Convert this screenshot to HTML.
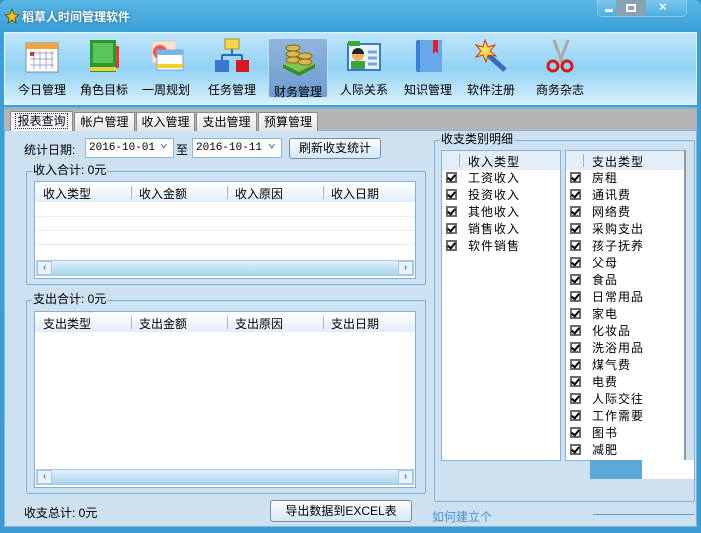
<!DOCTYPE html>
<html><head><meta charset="utf-8"><style>
*{box-sizing:border-box;margin:0;padding:0}
body{width:701px;height:533px;overflow:hidden;font-family:"Liberation Sans","Noto Sans CJK SC",sans-serif;font-size:12px;color:#000;background:#2f8fc8;position:relative}
.a{position:absolute}
.win{left:0;top:0;width:701px;height:533px;background:linear-gradient(#5ab8e6,#3aa0d8 30px,#3a9ad2);border-radius:6px 6px 0 0}
.title{left:22px;top:8px;color:#fff;font-weight:bold;font-size:12px;text-shadow:0 0 3px #1a5a8a}
.tb{left:4px;top:32px;width:693px;height:73px;background:linear-gradient(#bfe6fb,#92d2f4 50%,#d8f0fc);border:1px solid #e8f6ff}
.tool{top:36px;width:60px;height:64px;text-align:center}
.tool .l{position:absolute;left:-10px;right:-10px;top:45px;font-size:12px;text-align:center}
.tool svg{position:absolute;left:12px;top:2px}
.sel{background:linear-gradient(#8fb5dd,#6d9dd0);border:1px solid #c7dff3;border-radius:3px}
.tabs{left:4px;top:107px;width:693px;height:24px;background:#b5b5b5;border-top:2px solid #7fb3d8}
.tab{top:112px;height:19px;background:linear-gradient(#fafafa,#e6e6e6);border:1px solid #8a8a8a;border-bottom:none;font-size:12px;text-align:center;line-height:18px}
.content{left:4px;top:130px;width:693px;height:397px;background:#cde1f1;border:1px solid #8ab7d8}
.grp{border:1px solid #7fb2d6;border-radius:2px}
.gl{background:#cde1f1;padding:0 1px;font-size:12px;line-height:13px}
.combo{height:20px;background:#fff;border:1px solid #8fb7d6;font-family:"Liberation Mono",monospace;font-size:11px;line-height:18px;padding-left:3px}
.combo:after{content:"⌄";position:absolute;right:5px;top:-4px;color:#4a7fb0;font-size:14px;font-weight:bold}
.btn{background:linear-gradient(#fdfeff,#d5e7f6);border:1px solid #6f8eaa;border-radius:3px;text-align:center;line-height:19px}
.tbl{background:#fff;border:1px solid #7fb2d6}
.hd{position:absolute;left:0;right:0;top:0;height:20px;background:linear-gradient(#fff,#e3eef9);}
.hd span{position:absolute;top:3px;font-size:12px}
.hd i{position:absolute;top:4px;width:1px;height:13px;background:#9cb8d0}
.sb{position:absolute;left:1px;right:1px;height:16px;background:linear-gradient(#e0f0fb,#a8d5f0);border:1px solid #a9c9e3}
.sb b{position:absolute;top:0;width:15px;height:14px;background:#e8f3fb;border:1px solid #a9c9e3;color:#4680b8;font-size:10px;text-align:center;line-height:12px}
.list{background:#fff;border:1px solid #8ab4d4}
.row{position:absolute;left:4px;height:17px;font-size:12px;line-height:17px;letter-spacing:1px}
.cb{display:inline-block;width:11px;height:11px;border:2px solid #6b6b6b;margin-right:11px;vertical-align:-1px;position:relative;background:#fff}
.cb:after{content:"";position:absolute;left:1px;top:-1px;width:3px;height:6px;border:solid #000;border-width:0 2px 2px 0;transform:rotate(40deg)}
.hl{position:absolute;left:0;right:0;height:1px;background:#eee}
</style></head><body>
<div class="a win"></div>
<svg class="a" style="left:4px;top:8px" width="16" height="16"><polygon points="8,1 10,6 15,7 11,10 12,15 8,12 4,15 5,10 1,7 6,6" fill="#f4c21a" stroke="#6a5410"/></svg>
<div class="a title">稻草人时间管理软件</div>
<div class="a" style="left:597px;top:0;width:90px;height:17px;border:1px solid #8ac8ea;border-top:none;border-radius:0 0 5px 5px;background:linear-gradient(#7ec8ee,#4aaee0)"></div>
<div class="a" style="left:616px;top:0;width:30px;height:16px;background:#8aa0b3"></div>
<div class="a" style="left:605px;top:9px;width:8px;height:3px;background:#fff"></div>
<div class="a" style="left:626px;top:4px;width:10px;height:8px;border:2px solid #fff"></div>
<div class="a" style="left:659px;top:-1px;color:#fff;font-weight:bold;font-size:13px">×</div>
<div class="a tb"></div>
<div class="a tool" style="left:12px"><svg width="36" height="36"><rect x="2" y="5" width="32" height="29" fill="#fff" stroke="#7a8fb8"/><rect x="2" y="5" width="32" height="6" fill="#f2a23a"/><g stroke="#9aaacb"><path d="M6 15h24M6 21h24M6 27h24M10 13v18M16 13v18M22 13v18M28 13v18"/></g><rect x="6" y="14" width="4" height="4" fill="#d33"/></svg><div class="l">今日管理</div></div>
<div class="a tool" style="left:74px"><svg width="36" height="36"><rect x="28" y="8" width="5" height="22" fill="#e33"/><rect x="4" y="2" width="26" height="32" fill="#2a9a2a"/><rect x="7" y="5" width="20" height="20" fill="#5cc45c"/><rect x="4" y="29" width="26" height="4" fill="#e8d040"/></svg><div class="l">角色目标</div></div>
<div class="a tool" style="left:136px"><svg width="36" height="36"><rect x="4" y="3" width="24" height="22" fill="#fbe3d0" stroke="#ccc"/><circle cx="12" cy="14" r="7" fill="#e55"/><rect x="9" y="12" width="26" height="20" fill="#fff" stroke="#7aa5d8"/><rect x="9" y="12" width="26" height="5" fill="#7ab4e8"/><rect x="9" y="26" width="26" height="4" fill="#f5cf2a"/></svg><div class="l">一周规划</div></div>
<div class="a tool" style="left:202px"><svg width="36" height="36"><rect x="11" y="1" width="14" height="10" fill="#f8d84a" stroke="#b08a20"/><path d="M18 11v6M8 17h20M8 17v5M28 17v5" stroke="#2a6ab8" stroke-width="2" fill="none"/><rect x="1" y="22" width="14" height="12" fill="#3a78d0"/><rect x="22" y="22" width="13" height="12" fill="#d41a1a"/></svg><div class="l">任务管理</div></div>
<div class="a tool sel" style="left:268px;top:38px;width:60px;height:60px"><svg width="36" height="36" style="top:1px"><path d="M2 24l16 8 16-8-16-6z" fill="#7cc84a"/><path d="M2 24v4l16 8v-4zM34 24v4l-16 8v-4z" fill="#3e8a2a"/><g fill="#d8b850" stroke="#8a6a20"><ellipse cx="12" cy="20" rx="7" ry="3"/><ellipse cx="12" cy="14" rx="7" ry="3"/><ellipse cx="12" cy="8" rx="7" ry="3"/><ellipse cx="24" cy="22" rx="7" ry="3"/><ellipse cx="24" cy="16" rx="7" ry="3"/></g></svg><div class="l" style="top:44px">财务管理</div></div>
<div class="a tool" style="left:334px"><svg width="36" height="36"><rect x="2" y="6" width="32" height="26" fill="#e8f2fb" stroke="#3a7ac8" stroke-width="2"/><rect x="2" y="3" width="12" height="5" fill="#3ba83b"/><circle cx="12" cy="17" r="6" fill="#f0b060"/><path d="M6 16a6 6 0 0 1 12 0z" fill="#222"/><rect x="5" y="23" width="14" height="8" fill="#3ba83b"/><path d="M22 14h9M22 20h9M22 26h9" stroke="#7aa5d8" stroke-width="3"/></svg><div class="l">人际关系</div></div>
<div class="a tool" style="left:398px"><svg width="36" height="36"><rect x="6" y="2" width="26" height="32" rx="2" fill="#3a80d8"/><rect x="10" y="2" width="22" height="32" fill="#6aa8ec"/><path d="M23 2h5v14l-2.5-3-2.5 3z" fill="#d22"/></svg><div class="l">知识管理</div></div>
<div class="a tool" style="left:461px"><svg width="36" height="36"><path d="M14 16l18 16" stroke="#3a6ac0" stroke-width="5"/><polygon points="12,2 15,9 22,7 17,13 23,18 15,17 13,24 10,17 3,19 8,13 3,7 10,9" fill="#f4e050" stroke="#e03010"/></svg><div class="l">软件注册</div></div>
<div class="a tool" style="left:530px"><svg width="36" height="36"><path d="M12 2l8 22M26 2l-8 22" stroke="#aaa" stroke-width="3"/><circle cx="11" cy="28" r="5" fill="none" stroke="#d81a1a" stroke-width="3"/><circle cx="25" cy="28" r="5" fill="none" stroke="#d81a1a" stroke-width="3"/></svg><div class="l">商务杂志</div></div>
<div class="a tabs"></div>
<div class="a content"></div>
<div class="a tab" style="left:10px;width:63px;top:111px;height:20px;background:#f4f7fb"><span style="outline:1px dotted #333;padding:0 1px">报表查询</span></div>
<div class="a tab" style="left:74px;width:61px">帐户管理</div>
<div class="a tab" style="left:136px;width:59px">收入管理</div>
<div class="a tab" style="left:196px;width:61px">支出管理</div>
<div class="a tab" style="left:258px;width:60px">预算管理</div>
<div class="a" style="left:24px;top:141px">统计日期:</div>
<div class="a combo" style="left:85px;top:138px;width:89px">2016-10-01</div>
<div class="a" style="left:176px;top:141px">至</div>
<div class="a combo" style="left:192px;top:138px;width:90px">2016-10-11</div>
<div class="a btn" style="left:289px;top:138px;width:92px;height:21px">刷新收支统计</div>
<div class="a grp" style="left:26px;top:171px;width:400px;height:114px"></div>
<div class="a gl" style="left:32px;top:164px">收入合计: 0元</div>
<div class="a tbl" style="left:34px;top:181px;width:382px;height:98px">
<div class="hd"><span style="left:8px">收入类型</span><i style="left:96px"></i><span style="left:104px">收入金额</span><i style="left:192px"></i><span style="left:200px">收入原因</span><i style="left:288px"></i><span style="left:296px">收入日期</span></div>
<div class="hl" style="top:34px"></div><div class="hl" style="top:48px"></div><div class="hl" style="top:62px"></div>
<div class="sb" style="top:78px"><b style="left:0">‹</b><b style="right:0">›</b></div></div>
<div class="a grp" style="left:26px;top:300px;width:400px;height:194px"></div>
<div class="a gl" style="left:32px;top:293px">支出合计: 0元</div>
<div class="a tbl" style="left:34px;top:311px;width:382px;height:177px">
<div class="hd"><span style="left:8px">支出类型</span><i style="left:96px"></i><span style="left:104px">支出金额</span><i style="left:192px"></i><span style="left:200px">支出原因</span><i style="left:288px"></i><span style="left:296px">支出日期</span></div>
<div class="sb" style="top:157px"><b style="left:0">‹</b><b style="right:0">›</b></div></div>
<div class="a" style="left:24px;top:504px">收支总计: 0元</div>
<div class="a btn" style="left:270px;top:500px;width:142px;height:22px;line-height:20px">导出数据到EXCEL表</div>
<div class="a grp" style="left:434px;top:140px;width:261px;height:362px"></div>
<div class="a gl" style="left:440px;top:133px">收支类别明细</div>
<div class="a list" style="left:441px;top:150px;width:120px;height:311px">
<div class="hd" style="background:#e3eef9;height:19px"><i style="left:17px;top:3px"></i><span style="left:26px;top:2px;letter-spacing:1px">收入类型</span></div>
<div class="row" style="top:19px"><span class="cb"></span>工资收入</div>
<div class="row" style="top:36px"><span class="cb"></span>投资收入</div>
<div class="row" style="top:53px"><span class="cb"></span>其他收入</div>
<div class="row" style="top:70px"><span class="cb"></span>销售收入</div>
<div class="row" style="top:87px"><span class="cb"></span>软件销售</div>
</div>
<div class="a list" style="left:565px;top:150px;width:121px;height:311px;border-right:2px solid #999">
<div class="hd" style="background:#e3eef9;height:19px"><i style="left:17px;top:3px"></i><span style="left:26px;top:2px;letter-spacing:1px">支出类型</span></div>
<div class="row" style="top:19px"><span class="cb"></span>房租</div>
<div class="row" style="top:36px"><span class="cb"></span>通讯费</div>
<div class="row" style="top:53px"><span class="cb"></span>网络费</div>
<div class="row" style="top:70px"><span class="cb"></span>采购支出</div>
<div class="row" style="top:87px"><span class="cb"></span>孩子抚养</div>
<div class="row" style="top:104px"><span class="cb"></span>父母</div>
<div class="row" style="top:121px"><span class="cb"></span>食品</div>
<div class="row" style="top:138px"><span class="cb"></span>日常用品</div>
<div class="row" style="top:155px"><span class="cb"></span>家电</div>
<div class="row" style="top:172px"><span class="cb"></span>化妆品</div>
<div class="row" style="top:189px"><span class="cb"></span>洗浴用品</div>
<div class="row" style="top:206px"><span class="cb"></span>煤气费</div>
<div class="row" style="top:223px"><span class="cb"></span>电费</div>
<div class="row" style="top:240px"><span class="cb"></span>人际交往</div>
<div class="row" style="top:257px"><span class="cb"></span>工作需要</div>
<div class="row" style="top:274px"><span class="cb"></span>图书</div>
<div class="row" style="top:291px"><span class="cb"></span>减肥</div>
</div>
<div class="a" style="left:590px;top:460px;width:52px;height:19px;background:#5aa7d8"></div>
<div class="a" style="left:642px;top:460px;width:52px;height:19px;background:#fff"></div>
<div class="a" style="left:593px;top:514px;width:101px;height:1px;background:#5aa0d0"></div>
<div class="a" style="left:432px;top:508px;color:#4a90d8">如何建立个</div>
</body></html>
